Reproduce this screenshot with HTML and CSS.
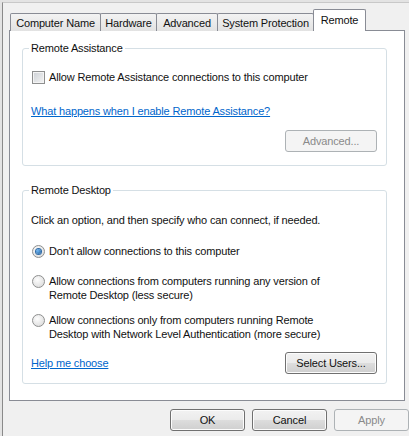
FILE: index.html
```html
<!DOCTYPE html>
<html>
<head>
<meta charset="utf-8">
<link rel="stylesheet" href="styles.css">
</head>
<body>
<div class="window">
  <div class="tabs">
    <div class="tab t1">Computer Name</div>
    <div class="tab t2">Hardware</div>
    <div class="tab t3">Advanced</div>
    <div class="tab t4">System Protection</div>
    <div class="tab t5 selected">Remote</div>
  </div>
  <div class="panel">
    <fieldset class="group ga">
      <legend>Remote Assistance</legend>
      <label class="check-row"><span class="checkbox"></span>Allow Remote Assistance connections to this computer</label>
      <a class="link ra-link">What happens when I enable Remote Assistance?</a>
      <div class="btn-row ra-btns"><span class="btn disabled wide">Advanced...</span></div>
    </fieldset>
    <fieldset class="group gd">
      <legend>Remote Desktop</legend>
      <p class="intro">Click an option, and then specify who can connect, if needed.</p>
      <label class="radio-row r1"><span class="radio checked"></span><span>Don't allow connections to this computer</span></label>
      <label class="radio-row r2"><span class="radio"></span><span>Allow connections from computers running any version of<br>Remote Desktop (less secure)</span></label>
      <label class="radio-row r3"><span class="radio"></span><span>Allow connections only from computers running Remote<br>Desktop with Network Level Authentication (more secure)</span></label>
      <div class="btn-row rd-btns"><a class="link">Help me choose</a><span class="btn wide">Select Users...</span></div>
    </fieldset>
  </div>
  <div class="dialog-btns">
    <span class="btn">OK</span>
    <span class="btn">Cancel</span>
    <span class="btn disabled">Apply</span>
  </div>
</div>
</body>
</html>
```

FILE: styles.css
```css
* { box-sizing: border-box; }
html, body { margin: 0; padding: 0; }
body {
  background: #e3e3e3;
  font-family: "Liberation Sans", Arial, sans-serif;
  font-size: 11px;
  letter-spacing: -0.15px;
  line-height: 14px;
  color: #111;
  width: 409px;
  height: 436px;
  overflow: hidden;
}
.window {
  margin: 2px 0 0 2px;
  height: 434px;
  border-left: 1px solid #8a8a8a;
  border-top: 1px solid #c8c8c8;
  background: #f0f0f0;
  padding: 6px 0 0 6px;
}
.tabs {
  display: flex;
  align-items: flex-end;
  height: 22px;
  padding-left: 1px;
  position: relative;
  z-index: 1;
}
.tab {
  height: 18px;
  border: 1px solid #898c95;
  border-bottom: none;
  margin-right: -1px;
  background: linear-gradient(#f3f3f3, #e2e2e2);
  display: flex;
  align-items: center;
  justify-content: center;
  padding-top: 1px;
  border-radius: 2px 2px 0 0;
  white-space: nowrap;
}
.t1 { width: 91px; }
.t2 { width: 57px; }
.t3 { width: 62px; }
.t4 { width: 97px; }
.t5 { width: 53px; }
.tab.selected {
  height: 22px;
  background: #fff;
  padding-bottom: 3px;
}
.panel {
  margin-top: -1px;
  width: 396px;
  height: 371px;
  border: 1px solid #898c95;
  background: #fff;
  padding: 10px 17px 0 12px;
}
.group {
  margin: 0;
  border: 1px solid #d5dfe5;
  border-radius: 3px;
  padding: 0 9px 0 8px;
  min-width: 0;
}
.group legend {
  padding: 0 2px;
  margin-left: -2px;
  line-height: 14px;
}
.ga { height: 125px; }
.gd { margin-top: 17px; height: 201px; }
.check-row {
  display: flex;
  align-items: center;
  margin-top: 15px;
  height: 14px;
}
.checkbox {
  width: 13px;
  height: 13px;
  margin: 0 4px 0 1px;
  border: 1px solid #8e8f8f;
  background: linear-gradient(135deg, #cdd1d6, #f4f4f4);
  box-shadow: inset 0 0 0 1px #f4f4f4;
  flex: none;
}
.link {
  color: #0066cc;
  text-decoration: underline;
  display: block;
}
.ra-link { margin-top: 20px; }
.btn-row {
  display: flex;
  justify-content: flex-end;
  align-items: center;
}
.ra-btns { margin-top: 12px; }
.btn {
  display: inline-flex;
  align-items: center;
  justify-content: center;
  height: 22px;
  width: 75px;
  border: 1px solid #707070;
  border-radius: 3px;
  background: linear-gradient(#f2f2f2 0%, #ebebeb 50%, #dddddd 51%, #cfcfcf 100%);
  box-shadow: inset 0 0 0 1px #fcfcfc;
}
.btn.wide { width: 92px; }
.btn.disabled {
  color: #8a8a8a;
  border-color: #adb2b5;
  background: #f4f4f4;
  box-shadow: none;
}
.intro { margin: 16px 0 0; }
.radio-row {
  display: flex;
  align-items: flex-start;
}
.r1 { margin-top: 17px; }
.r2 { margin-top: 16px; }
.r3 { margin-top: 11px; }
.radio {
  width: 13px;
  height: 13px;
  margin: 1px 4px 0 1px;
  border-radius: 50%;
  border: 1px solid #8e8f8f;
  background: radial-gradient(circle at 40% 35%, #fdfdfd, #d6d6d6);
  flex: none;
  display: flex;
  align-items: center;
  justify-content: center;
}
.radio.checked::after {
  content: "";
  width: 5px;
  height: 5px;
  border-radius: 50%;
  background: radial-gradient(circle at 35% 35%, #6fb7f5, #1d5a96);
  box-shadow: 0 0 0 1px #2f6aa6;
}
.rd-btns { margin-top: 11px; justify-content: space-between; }
.dialog-btns {
  display: flex;
  justify-content: flex-end;
  gap: 7px;
  margin-top: 8px;
}
```
